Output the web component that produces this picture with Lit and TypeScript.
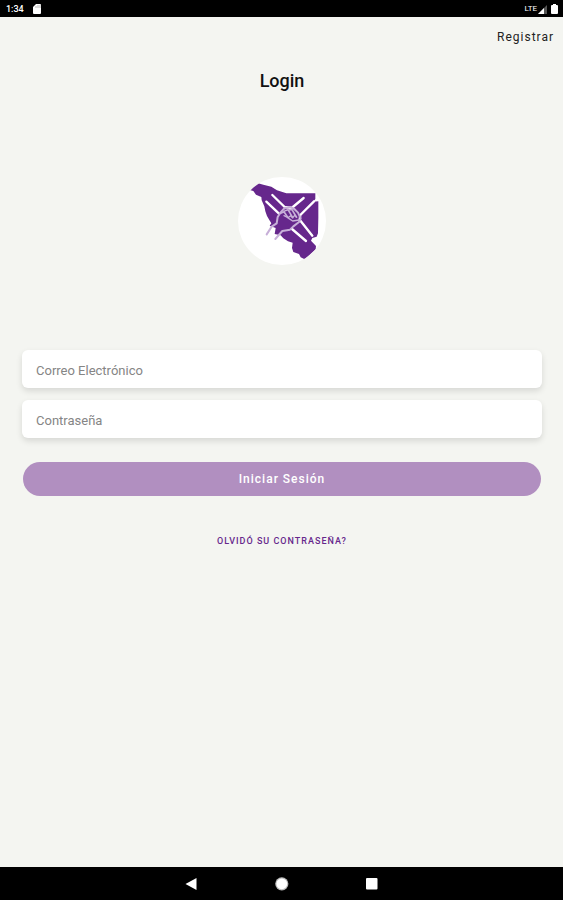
import { LitElement, html, css } from "lit";
import { customElement, state } from "lit/decorators.js";

@customElement("status-bar")
class StatusBar extends LitElement {
  static styles = css`
    :host {
      display: flex;
      align-items: center;
      justify-content: space-between;
      height: 17px;
      padding: 1px 5px 0 6px;
      box-sizing: border-box;
      background: #000;
      color: #fff;
      font-size: 9px;
      line-height: 16px;
      font-weight: 500;
    }
    .group {
      display: flex;
      align-items: center;
    }
    .left {
      gap: 9px;
    }
    .right {
      gap: 1px;
    }
    .network {
      font-size: 8px;
      font-weight: 400;
    }
    .battery {
      margin-left: 3px;
    }
    svg {
      display: block;
    }
  `;

  render() {
    return html`
      <div class="group left">
        <span>1:34</span>
        <svg width="8" height="10" viewBox="0 0 8 10" aria-hidden="true">
          <path d="M3 0H7Q8 0 8 1V9Q8 10 7 10H1Q0 10 0 9V3Z" fill="#fff" />
          <path d="M3 2V4M5 1V4M7 1V4" stroke="#888" stroke-width="0.6" />
        </svg>
      </div>
      <div class="group right">
        <span class="network">LTE</span>
        <svg width="9" height="9" viewBox="0 0 9 9" aria-hidden="true">
          <path d="M9 0V9H0Z" fill="#555" />
          <path d="M6 3V9H0Z" fill="#fff" />
        </svg>
        <svg class="battery" width="7" height="10" viewBox="0 0 7 10" aria-hidden="true">
          <path d="M2 0H5V1H6Q7 1 7 2V9Q7 10 6 10H1Q0 10 0 9V2Q0 1 1 1H2Z" fill="#fff" />
        </svg>
      </div>
    `;
  }
}

@customElement("nav-bar")
class NavBar extends LitElement {
  static styles = css`
    :host {
      display: flex;
      align-items: center;
      justify-content: center;
      gap: 74px;
      height: 33px;
      background: #000;
    }
    button {
      display: block;
      padding: 0;
      border: 0;
      background: none;
    }
    svg {
      display: block;
    }
  `;

  render() {
    return html`
      <button aria-label="Atrás">
        <svg width="16" height="16" viewBox="0 0 16 16">
          <path d="M12.5 2V14L1.5 8Z" fill="#fff" />
        </svg>
      </button>
      <button aria-label="Inicio">
        <svg width="16" height="16" viewBox="0 0 16 16">
          <circle cx="7.8" cy="7.8" r="6.6" fill="#bbb" />
          <circle cx="7.8" cy="7.8" r="5.4" fill="#fff" />
        </svg>
      </button>
      <button aria-label="Recientes">
        <svg width="16" height="16" viewBox="0 0 16 16">
          <rect x="2" y="2" width="11.5" height="11.5" rx="1" fill="#fff" />
        </svg>
      </button>
    `;
  }
}

@customElement("app-logo")
class AppLogo extends LitElement {
  static styles = css`
    :host {
      display: block;
      width: 88px;
      height: 88px;
      border-radius: 50%;
      background: #fff;
      overflow: hidden;
    }
    svg {
      display: block;
      width: 100%;
      height: 100%;
    }
  `;

  render() {
    return html`
      <svg viewBox="24 21 264 264" role="img" aria-label="Logotipo">
        <path
          fill="#66278c"
          d="M59 60L79 38L100 44L124 50L141 61L169 70H256V87L250 95L265 94L265 143L264 190L260 200L247 204L243 212L258 228L257 238L239 254L224 268L212 262L207 252L190 246L186 234L188 218L174 214L160 205L152 196L134 192L137 174L119 167L124 160L118 150L111 138L106 124L103 109L95 91L94 81L78 74L70 63Z"
        />
        <g fill="none" stroke="#fff" stroke-linecap="round" stroke-linejoin="round">
          <path stroke-width="7" d="M127 75L164 111L185 114L221 84" />
          <path stroke-width="7" d="M109 95L147 131" />
          <path stroke-width="7" d="M252 94L211 135L209 149L247 197" />
          <path stroke-width="7" d="M186 177L228 213" />
        </g>
        <g fill="none" stroke="#c7afd8" stroke-linecap="round" stroke-linejoin="round">
          <path stroke-width="6" d="M110 193L125 170L140 160L143 141L152 127L164 114L181 111L193 117L204 128L212 145L207 156L190 169L180 179L157 183L136 207" />
          <path stroke-width="5" d="M152 130L162 125L174 143M165 122L174 119L188 143M179 119L186 119L199 141" />
          <path stroke-width="4" d="M162 137L174 143L182 137L188 143L194 136L200 142M176 145L188 153L207 150" />
        </g>
      </svg>
    `;
  }
}

@customElement("app-root")
class AppRoot extends LitElement {
  @state() private email = "";
  @state() private password = "";

  static styles = css`
    :host {
      display: flex;
      flex-direction: column;
      min-height: 100vh;
      background: #f4f5f1;
      color: #111;
      font-family: Roboto, "Liberation Sans", sans-serif;
    }
    header {
      display: flex;
      justify-content: flex-end;
      padding: 12px 9px 0;
    }
    a {
      text-decoration: none;
      letter-spacing: 1px;
    }
    .register {
      color: #222;
      font-size: 12px;
      line-height: 16px;
    }
    main {
      flex: 1;
      display: flex;
      flex-direction: column;
      align-items: center;
      padding: 24px 21px 24px 22px;
    }
    h1 {
      margin: 0;
      font-size: 18px;
      line-height: 24px;
      font-weight: 500;
    }
    app-logo {
      margin: 84px 0 85px;
    }
    form {
      align-self: stretch;
      display: flex;
      flex-direction: column;
      gap: 12px;
    }
    input {
      box-sizing: border-box;
      width: 100%;
      height: 38px;
      padding: 3px 14px 0;
      border: 0;
      border-radius: 6px;
      background: #fff;
      box-shadow: 0 3px 6px rgba(0, 0, 0, 0.12);
      color: #222;
      font: 400 13px/16px Roboto, "Liberation Sans", sans-serif;
    }
    input::placeholder {
      color: #858585;
      opacity: 1;
    }
    .submit {
      height: 34px;
      margin: 12px 1px 0;
      padding: 0;
      border: 0;
      border-radius: 17px;
      background: #b18fc0;
      color: #fff;
      font: 500 12px/16px Roboto, "Liberation Sans", sans-serif;
      letter-spacing: 1px;
    }
    .forgot {
      margin-top: 38px;
      color: #66278c;
      font-size: 9px;
      line-height: 14px;
      font-weight: 500;
      text-transform: uppercase;
    }
  `;

  render() {
    return html`
      <status-bar></status-bar>
      <header><a class="register" href="#registrar">Registrar</a></header>
      <main>
        <h1>Login</h1>
        <app-logo></app-logo>
        <form @submit=${(e: Event) => e.preventDefault()}>
          <input
            type="email"
            aria-label="Correo Electrónico"
            placeholder="Correo Electrónico"
            .value=${this.email}
            @input=${(e: Event) => (this.email = (e.target as HTMLInputElement).value)}
          />
          <input
            type="password"
            aria-label="Contraseña"
            placeholder="Contraseña"
            .value=${this.password}
            @input=${(e: Event) => (this.password = (e.target as HTMLInputElement).value)}
          />
          <button class="submit" type="submit">Iniciar Sesión</button>
        </form>
        <a class="forgot" href="#recuperar">Olvidó su contraseña?</a>
      </main>
      <nav-bar></nav-bar>
    `;
  }
}
